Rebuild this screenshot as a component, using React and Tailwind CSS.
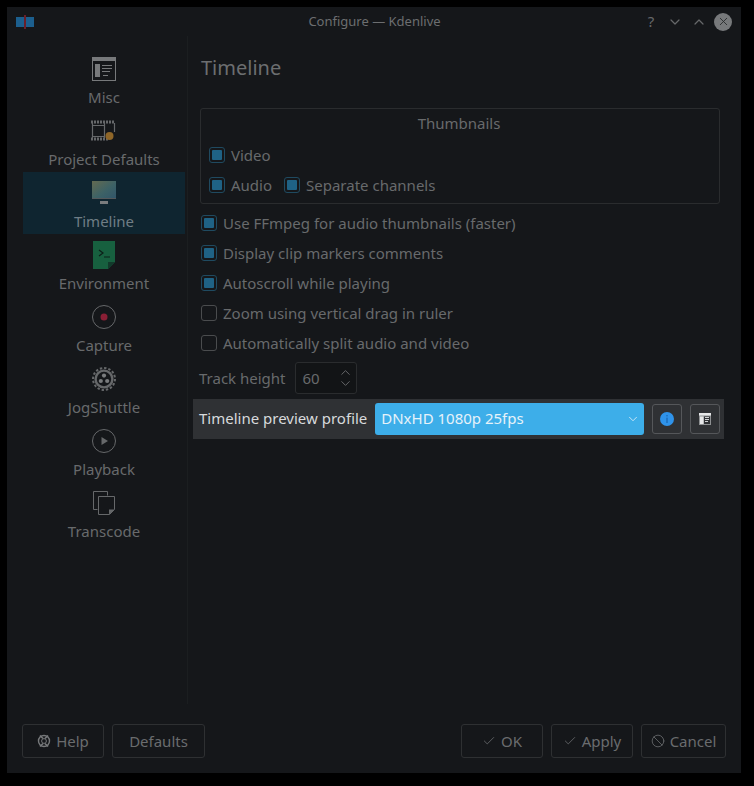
import React from 'react';
import { Check, Ban, ChevronDown, ChevronUp, X } from 'lucide-react';

const font = { fontFamily: '"Noto Sans", sans-serif' };

const MiscIcon = () => (
  <svg width="24" height="24" viewBox="0 0 24 24">
    <rect x="0.5" y="0.5" width="23" height="23" fill="none" stroke="#77797b" />
    <rect x="0" y="0" width="24" height="4" fill="#77797b" />
    <rect x="3" y="7" width="5" height="13" fill="#77797b" />
    <path d="M10 8.5h10M10 11.5h10M10 14.5h8M11 18.5h5" stroke="#77797b" fill="none" />
  </svg>
);

const FilmIcon = () => (
  <svg width="26" height="24" viewBox="0 0 26 24">
    <path d="M0 3h24" stroke="#66686a" strokeWidth="3" strokeDasharray="2 1" fill="none" />
    <path d="M0 20h17" stroke="#66686a" strokeWidth="3" strokeDasharray="2 1" fill="none" />
    <path d="M1.5 4v15M13.5 4v15M23.5 4v9M1.5 6.5h12M1.5 17.5h12" stroke="#66686a" strokeWidth="1.2" fill="none" />
    <circle cx="18.5" cy="17" r="4" fill="#8f6628" />
  </svg>
);

const MonitorIcon = () => (
  <svg width="24" height="24" viewBox="0 0 24 24">
    <defs>
      <linearGradient id="scr" x1="0" y1="0" x2="1" y2="1">
        <stop offset="0" stopColor="#646a50" />
        <stop offset="0.55" stopColor="#3d6266" />
        <stop offset="1" stopColor="#30556a" />
      </linearGradient>
    </defs>
    <rect x="0" y="0" width="24" height="18" fill="url(#scr)" />
    <rect x="0" y="17" width="24" height="1" fill="#54585a" />
    <rect x="8" y="20" width="8" height="3" fill="#7a7c7e" />
  </svg>
);

const TerminalIcon = () => (
  <svg width="24" height="28" viewBox="0 0 24 28" className="-mb-[2px]">
    <path d="M1 0h22v21l-7 7H1z" fill="#17603f" />
    <path d="M16 28v-7h7z" fill="#123a2b" />
    <path d="M7 9l4 3-4 3M12 16h6" stroke="#0c1f18" strokeWidth="1.2" fill="none" />
  </svg>
);

const CaptureIcon = () => (
  <svg width="24" height="24" viewBox="0 0 24 24">
    <circle cx="12" cy="12" r="11.5" fill="none" stroke="#66686a" />
    <circle cx="12" cy="12" r="3.5" fill="#8a1f35" />
  </svg>
);

const JogIcon = () => (
  <svg width="24" height="24" viewBox="0 0 24 24">
    <circle cx="12" cy="12" r="11" fill="none" stroke="#66686a" strokeWidth="2" strokeDasharray="2.4 1.9" />
    <circle cx="12" cy="12" r="8.4" fill="none" stroke="#66686a" strokeWidth="2.4" />
    <circle cx="12" cy="8.6" r="2.1" fill="#7a7c7e" />
    <circle cx="8.8" cy="14" r="2.1" fill="#7a7c7e" />
    <circle cx="15.2" cy="14" r="2.1" fill="#7a7c7e" />
  </svg>
);

const HelpIcon = () => (
  <svg width="14" height="14" viewBox="0 0 14 14">
    <circle cx="7" cy="7" r="5.5" fill="none" stroke="#77797b" strokeWidth="1.4" />
    <circle cx="7" cy="7" r="2.4" fill="none" stroke="#77797b" />
    <path d="M3 1.5l3 3M11 1.5l-3 3M3 12.5l3-3M11 12.5l-3-3" stroke="#77797b" strokeWidth="1.6" fill="none" />
  </svg>
);

const PlayIcon = () => (
  <svg width="24" height="24" viewBox="0 0 24 24">
    <circle cx="12" cy="12" r="11.5" fill="none" stroke="#66686a" />
    <path d="M9.5 8l6.5 4-6.5 4z" fill="#66686a" />
  </svg>
);

const TranscodeIcon = () => (
  <svg width="22" height="24" viewBox="0 0 22 24">
    <path d="M4.5 18.5H0.5V0.5h14v4" fill="none" stroke="#66686a" />
    <path d="M5.5 5.5h16v13l-5 5h-11z" fill="none" stroke="#66686a" />
    <path d="M16 23.5v-5h5.5z" fill="#66686a" />
  </svg>
);

const pages = [
  { label: 'Misc', icon: <MiscIcon /> },
  { label: 'Project Defaults', icon: <FilmIcon /> },
  { label: 'Timeline', icon: <MonitorIcon />, active: true },
  { label: 'Environment', icon: <TerminalIcon /> },
  { label: 'Capture', icon: <CaptureIcon /> },
  { label: 'JogShuttle', icon: <JogIcon /> },
  { label: 'Playback', icon: <PlayIcon /> },
  { label: 'Transcode', icon: <TranscodeIcon /> },
];

function CheckRow({ label, checked = true }) {
  return (
    <div className="flex items-center gap-[6px] h-[30px]">
      {checked ? (
        <span className="w-4 h-4 rounded-[3px] border border-[#1f4a60] flex items-center justify-center">
          <span className="w-[10px] h-[10px] rounded-[1px] bg-[#1f6285]" />
        </span>
      ) : (
        <span className="w-4 h-4 rounded-[3px] border border-[#4a4c4e]" />
      )}
      <span>{label}</span>
    </div>
  );
}

function FooterButton({ icon, label, className }) {
  return (
    <button className={`h-[34px] rounded-[3px] border border-[#2e3032] flex items-center justify-center gap-[5px] text-[#6a6c6e] ${className}`}>
      {icon}
      {label}
    </button>
  );
}

export default function App() {
  return (
    <div className="w-[754px] h-[786px] bg-black pt-[7px] pl-[7px] overflow-hidden text-[15px]" style={font}>
      <div className="w-[734px] h-[766px] bg-[#15171a] flex flex-col text-[#686a6c]">
        {/* title bar */}
        <div className="h-[29px] flex items-center shrink-0">
          <svg className="ml-[9px]" width="18" height="14" viewBox="0 0 18 14">
            <rect x="0" y="2" width="8" height="10" fill="#1c5f8e" />
            <rect x="10" y="2" width="8" height="10" fill="#1c5f8e" />
            <rect x="8" y="0" width="2" height="14" fill="#6a1f2a" />
          </svg>
          <span className="flex-1 text-center text-[13px] text-[#6c6e70] pl-[76px]">Configure — Kdenlive</span>
          <div className="flex items-center mr-[9px] text-[#66686a]">
            <span className="w-[24px] text-center text-[15px] leading-none">?</span>
            <span className="w-[24px] flex justify-center"><ChevronDown size={16} strokeWidth={1.8} /></span>
            <span className="w-[24px] flex justify-center"><ChevronUp size={16} strokeWidth={1.8} /></span>
            <span className="ml-[3px] w-[18px] h-[18px] rounded-full bg-[#77797b] flex items-center justify-center">
              <X size={13} strokeWidth={1.6} className="text-[#26282a]" />
            </span>
          </div>
        </div>

        <div className="flex flex-1 min-h-0">
          {/* page list */}
          <div className="w-[178px] pl-[16px] pt-[12px] shrink-0">
            {pages.map((p) => (
              <div
                key={p.label}
                className={`w-[162px] h-[62px] flex flex-col items-center ${p.active ? 'bg-[#0f2530] text-[#6f7d85]' : ''}`}
              >
                <div className="h-[33px] flex items-end justify-center">{p.icon}</div>
                <div className="mt-[6px] leading-[20px] whitespace-nowrap">{p.label}</div>
              </div>
            ))}
          </div>

          {/* page content */}
          <div className="flex-1 ml-[2px] border-l border-[#1b1e20] pl-[5px] pr-[17px] min-w-0">
            <h1 className="text-[20px] leading-[28px] pl-[8px] pt-[18px] text-[#6c6e70]">Timeline</h1>
            <div className="ml-[7px] mt-[26px] w-[520px] h-[96px] border border-[#2a2c2e] rounded-[3px] pl-[8px] pt-[4px]">
              <div className="text-center h-[20px] leading-[20px] pr-[10px]">Thumbnails</div>
              <div className="mt-[7px]">
                <CheckRow label="Video" />
                <div className="flex gap-3">
                  <CheckRow label="Audio" />
                  <CheckRow label="Separate channels" />
                </div>
              </div>
            </div>
            <div className="ml-[8px] mt-[4px]">
              <CheckRow label="Use FFmpeg for audio thumbnails (faster)" />
              <CheckRow label="Display clip markers comments" />
              <CheckRow label="Autoscroll while playing" />
              <CheckRow label="Zoom using vertical drag in ruler" checked={false} />
              <CheckRow label="Automatically split audio and video" checked={false} />
            </div>
            <div className="flex items-center ml-[6px] mt-[4px] gap-[9px] h-[32px]">
              <span>Track height</span>
              <div className="w-[62px] h-[32px] rounded-[3px] border border-[#2a2c2e] bg-[#121416] flex items-center pl-[7px]">
                <span className="flex-1">60</span>
                <div className="flex flex-col mr-[3px] text-[#77797b]">
                  <ChevronUp size={15} strokeWidth={1.3} className="-mb-[2px]" />
                  <ChevronDown size={15} strokeWidth={1.3} className="-mt-[2px]" />
                </div>
              </div>
            </div>
            <div className="w-[531px] h-[40px] mt-[5px] bg-[#2f3134] flex items-center pl-[6px] pb-[1px] text-[#d8dadc]">
              <span className="whitespace-nowrap">Timeline preview profile</span>
              <div className="ml-[8px] w-[269px] h-[32px] rounded-[3px] bg-[#3daee9] flex items-center px-[6px] text-[#e6f2f9]">
                <span className="flex-1">DNxHD 1080p 25fps</span>
                <ChevronDown size={14} strokeWidth={1.5} className="-mr-[2px] text-[#d6ecf7]" />
              </div>
              <button className="ml-[8px] w-[30px] h-[30px] rounded-[3px] border border-[#55575a] bg-[#2f3134] flex items-center justify-center">
                <svg width="14" height="14" viewBox="0 0 14 14">
                  <circle cx="7" cy="7" r="7" fill="#2f93ea" />
                  <rect x="6.4" y="3" width="1.2" height="1.4" fill="#1a66b0" />
                  <rect x="6.4" y="5.6" width="1.2" height="5.4" fill="#1a66b0" />
                </svg>
              </button>
              <button className="ml-[8px] w-[30px] h-[30px] rounded-[3px] border border-[#55575a] bg-[#2f3134] flex items-center justify-center">
                <svg width="12" height="12" viewBox="0 0 12 12">
                  <rect x="0" y="0" width="12" height="12" fill="#8e9092" />
                  <rect x="0" y="0" width="12" height="2.5" fill="#e6e7e8" />
                  <rect x="1" y="3.5" width="3.5" height="7.5" fill="#e6e7e8" />
                  <rect x="5" y="3.5" width="6" height="7.5" fill="#2f3134" />
                  <path d="M6 4.5h4M6 6.5h4M6 8.5h3" stroke="#d0d2d4" fill="none" />
                </svg>
              </button>
            </div>
          </div>
        </div>

        {/* footer buttons */}
        <div className="h-[69px] shrink-0 flex items-start pl-[15px] pr-[15px] pt-[20px]">
          <FooterButton icon={<HelpIcon />} label="Help" className="w-[82px]" />
          <FooterButton label="Defaults" className="w-[93px] ml-[8px]" />
          <div className="flex-1" />
          <FooterButton icon={<Check size={14} strokeWidth={1.4} />} label="OK" className="w-[82px]" />
          <FooterButton icon={<Check size={14} strokeWidth={1.4} />} label="Apply" className="w-[82px] ml-[8px]" />
          <FooterButton icon={<Ban size={14} strokeWidth={1.4} />} label="Cancel" className="w-[85px] ml-[8px]" />
        </div>
      </div>
    </div>
  );
}
